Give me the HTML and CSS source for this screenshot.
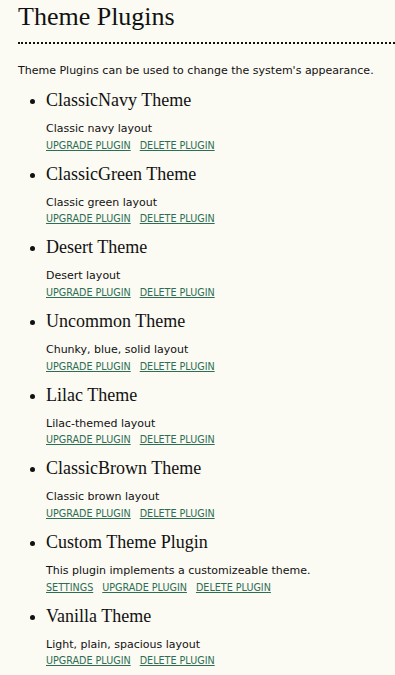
FILE: index.html
```html
<!DOCTYPE html>
<html>
<head>
<meta charset="utf-8">
<link rel="stylesheet" href="styles.css">
</head>
<body>
<div class="main">
  <h2 class="title">Theme Plugins</h2>
  <p class="intro">Theme Plugins can be used to change the system's appearance.</p>
  <ul class="plugins">
    <li class="plugin">
      <h4 class="name">ClassicNavy Theme</h4>
      <p class="desc">Classic navy layout</p>
      <div class="actions"><a href="#" class="action">Upgrade Plugin</a><a href="#" class="action">Delete Plugin</a></div>
    </li>
    <li class="plugin">
      <h4 class="name">ClassicGreen Theme</h4>
      <p class="desc">Classic green layout</p>
      <div class="actions"><a href="#" class="action">Upgrade Plugin</a><a href="#" class="action">Delete Plugin</a></div>
    </li>
    <li class="plugin">
      <h4 class="name">Desert Theme</h4>
      <p class="desc">Desert layout</p>
      <div class="actions"><a href="#" class="action">Upgrade Plugin</a><a href="#" class="action">Delete Plugin</a></div>
    </li>
    <li class="plugin">
      <h4 class="name">Uncommon Theme</h4>
      <p class="desc">Chunky, blue, solid layout</p>
      <div class="actions"><a href="#" class="action">Upgrade Plugin</a><a href="#" class="action">Delete Plugin</a></div>
    </li>
    <li class="plugin">
      <h4 class="name">Lilac Theme</h4>
      <p class="desc">Lilac-themed layout</p>
      <div class="actions"><a href="#" class="action">Upgrade Plugin</a><a href="#" class="action">Delete Plugin</a></div>
    </li>
    <li class="plugin">
      <h4 class="name">ClassicBrown Theme</h4>
      <p class="desc">Classic brown layout</p>
      <div class="actions"><a href="#" class="action">Upgrade Plugin</a><a href="#" class="action">Delete Plugin</a></div>
    </li>
    <li class="plugin">
      <h4 class="name">Custom Theme Plugin</h4>
      <p class="desc">This plugin implements a customizeable theme.</p>
      <div class="actions"><a href="#" class="action">Settings</a><a href="#" class="action">Upgrade Plugin</a><a href="#" class="action">Delete Plugin</a></div>
    </li>
    <li class="plugin">
      <h4 class="name">Vanilla Theme</h4>
      <p class="desc">Light, plain, spacious layout</p>
      <div class="actions"><a href="#" class="action">Upgrade Plugin</a><a href="#" class="action">Delete Plugin</a></div>
    </li>
  </ul>
</div>
</body>
</html>
```

FILE: styles.css
```css
html, body {
  margin: 0;
  padding: 0;
  background: #fbfaf3;
}
body {
  font-family: "DejaVu Sans", Verdana, sans-serif;
  color: #111;
  overflow: hidden;
}
.main {
  padding-left: 18px;
}
.title {
  font-family: "Liberation Serif", Georgia, serif;
  font-weight: normal;
  font-size: 26px;
  line-height: 30px;
  margin: 0;
  padding-top: 2px;
  padding-bottom: 10px;
  border-bottom: 2px dotted #111;
}
.intro {
  font-size: 11px;
  line-height: 14px;
  margin: 20px 0 0 0;
}
.plugins {
  margin: 11px 0 0 0;
  padding: 0 0 0 28px;
  list-style: disc;
}
.plugin {
  margin: 0;
  padding: 0;
  height: 73.7px;
}
.plugin::marker {
  font-size: 15px;
}
.name {
  font-family: "Liberation Serif", Georgia, serif;
  font-weight: normal;
  font-size: 18px;
  line-height: 22px;
  margin: 0;
}
.desc {
  font-size: 11px;
  line-height: 14px;
  margin: 11px 0 0 0;
}
.actions {
  display: flex;
  gap: 9px;
  font-size: 9.6px;
  line-height: 12px;
  margin-top: 3.5px;
}
.action {
  color: #2d6e54;
  text-transform: uppercase;
  text-decoration: underline;
}
```
